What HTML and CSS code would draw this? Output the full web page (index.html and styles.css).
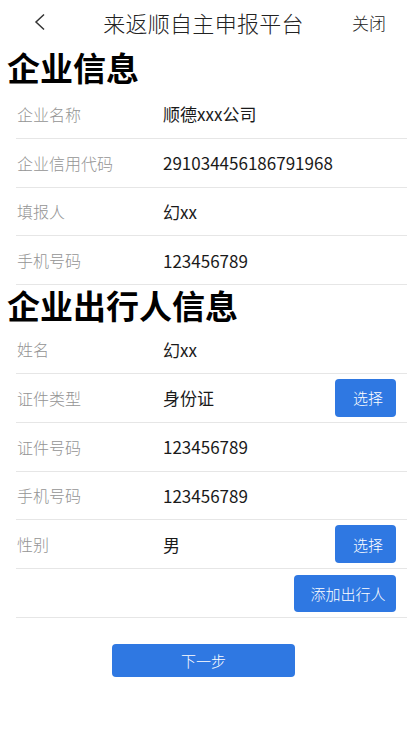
FILE: index.html
```html
<!DOCTYPE html>
<html lang="zh-CN">
<head>
<meta charset="utf-8">
<title>来返顺自主申报平台</title>
<link rel="stylesheet" href="styles.css">
</head>
<body>
<header class="topbar">
  <span class="back">
    <svg width="13" height="18" viewBox="0 0 13 18"><path d="M11 1.5 L3 9 L11 16.5" fill="none" stroke="#333" stroke-width="1.5"/></svg>
  </span>
  <span class="title">来返顺自主申报平台</span>
  <span class="close">关闭</span>
</header>

<h1 class="section-title">企业信息</h1>
<div class="form">
  <div class="row"><span class="label">企业名称</span><span class="value">顺德xxx公司</span></div>
  <div class="row"><span class="label">企业信用代码</span><span class="value">291034456186791968</span></div>
  <div class="row"><span class="label">填报人</span><span class="value">幻xx</span></div>
  <div class="row"><span class="label">手机号码</span><span class="value">123456789</span></div>
</div>

<h1 class="section-title second">企业出行人信息</h1>
<div class="form">
  <div class="row"><span class="label">姓名</span><span class="value">幻xx</span></div>
  <div class="row"><span class="label">证件类型</span><span class="value">身份证</span><button class="btn btn-select">选择</button></div>
  <div class="row"><span class="label">证件号码</span><span class="value">123456789</span></div>
  <div class="row"><span class="label">手机号码</span><span class="value">123456789</span></div>
  <div class="row"><span class="label">性别</span><span class="value">男</span><button class="btn btn-select">选择</button></div>
  <div class="row row-action"><button class="btn btn-add">添加出行人</button></div>
</div>

<div class="footer">
  <button class="btn btn-next">下一步</button>
</div>
</body>
</html>
```

FILE: styles.css
```css
* { box-sizing: border-box; }
html, body {
  margin: 0;
  padding: 0;
  background: #fff;
  font-family: "Noto Sans CJK SC", "Noto Sans", sans-serif;
  color: #1a1a1a;
}

.topbar {
  height: 44px;
  display: grid;
  grid-template-columns: 1fr auto 1fr;
  align-items: center;
}
.back {
  padding-left: 33px;
  display: flex;
  align-items: center;
  height: 44px;
}
.back svg { display: block; }
.title {
  font-size: 22px;
  font-weight: 300;
  color: #222;
  letter-spacing: 0.3px;
}
.close {
  justify-self: end;
  padding-right: 21px;
  font-size: 17px;
  font-weight: 300;
  color: #222;
}

.section-title {
  margin: 0;
  padding-left: 7px;
  height: 46px;
  line-height: 46px;
  font-size: 33px;
  font-weight: 700;
  color: #000;
}
.section-title.second {
  height: 40px;
  line-height: 40px;
}

.form { margin-left: 16px; }
.row {
  display: flex;
  align-items: center;
  height: 48.8px;
  border-bottom: 1px solid #e6e6e6;
  padding-right: 11px;
}
.label {
  width: 147px;
  padding-left: 1px;
  font-size: 16px;
  font-weight: 300;
  color: #949494;
  flex-shrink: 0;
}
.value {
  flex: 1;
  font-size: 17px;
  color: #1a1a1a;
}

.btn {
  border: none;
  border-radius: 4px;
  background: #2f78e2;
  color: #fff;
  font-family: inherit;
  font-size: 15px;
  font-weight: 300;
  padding: 0;
  cursor: pointer;
}
.btn-select {
  width: 61px;
  height: 38px;
  padding-left: 5px;
}
.row-action { justify-content: flex-end; }
.btn-add {
  width: 102px;
  height: 37px;
  padding-left: 6px;
}

.footer {
  display: flex;
  justify-content: center;
  padding-top: 26px;
}
.btn-next {
  width: 183px;
  height: 33px;
  font-size: 15px;
}
```
